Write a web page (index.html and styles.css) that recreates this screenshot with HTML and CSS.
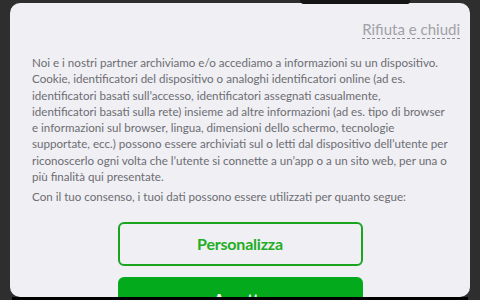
FILE: index.html
```html
<!DOCTYPE html>
<html lang="it">
<head>
<meta charset="utf-8">
<link rel="stylesheet" href="styles.css">
</head>
<body>
<div class="backdrop"><div class="shape"></div></div>
<div class="card">
  <div class="top">
    <a class="reject" href="#">Rifiuta e chiudi</a>
  </div>
  <p class="text">Noi e i nostri partner archiviamo e/o accediamo a informazioni su un dispositivo.<br>Cookie, identificatori del dispositivo o analoghi identificatori online (ad es.<br>identificatori basati sull’accesso, identificatori assegnati casualmente,<br>identificatori basati sulla rete) insieme ad altre informazioni (ad es. tipo di browser<br>e informazioni sul browser, lingua, dimensioni dello schermo, tecnologie<br>supportate, ecc.) possono essere archiviati sul o letti dal dispositivo dell’utente per<br>riconoscerlo ogni volta che l’utente si connette a un’app o a un sito web, per una o<br>più finalità qui presentate.</p>
  <p class="text second">Con il tuo consenso, i tuoi dati possono essere utilizzati per quanto segue:</p>
  <div class="actions">
    <button class="btn outline">Personalizza</button>
    <button class="btn solid">Accetta</button>
  </div>
</div>
<div class="strip"></div>
</body>
</html>
```
FILE: styles.css
```css
html, body {
  margin: 0;
  padding: 0;
  height: 300px;
  overflow: hidden;
  background: #2e2e2f;
}
body {
  font-family: "Lato", "Open Sans", sans-serif;
}
.backdrop {
  height: 3px;
  position: relative;
}
.shape {
  position: absolute;
  left: 300px;
  top: 0;
  width: 110px;
  height: 4px;
  background: #151515;
  border-radius: 0 0 40px 60px;
}
.card {
  margin: 0 10px;
  height: 294px;
  box-sizing: border-box;
  background: #efeff4;
  border-radius: 10px;
  overflow: hidden;
  padding: 17px 10px 0 22px;
}
.top {
  display: flex;
  justify-content: flex-end;
}
.reject {
  font-size: 15px;
  line-height: 18px;
  color: #a1a1a8;
  text-decoration: none;
  border-bottom: 1px dashed #8f8f96;
  letter-spacing: 0;
}
.text {
  margin: 16px 0 0;
  width: 428px;
  font-size: 11.6px;
  line-height: 16.3px;
  color: #6d6d72;
  white-space: nowrap;
  letter-spacing: 0;
}
.text.second {
  margin-top: 4px;
}
.actions {
  margin-top: 16px;
  display: flex;
  flex-direction: column;
  align-items: center;
  gap: 11px;
  padding-right: 12px;
}
.btn {
  width: 245px;
  height: 44px;
  border-radius: 6px;
  font-family: "Lato", "Open Sans", sans-serif;
  font-weight: 700;
  font-size: 16px;
  letter-spacing: -0.2px;
  cursor: pointer;
}
.outline {
  background: transparent;
  border: 2px solid #1ba51f;
  color: #1fae24;
}
.solid {
  background: #03aa1b;
  border: none;
  color: #ffffff;
}
.strip {
  margin: 0 12px;
  height: 3px;
  background: #000;
}
```
